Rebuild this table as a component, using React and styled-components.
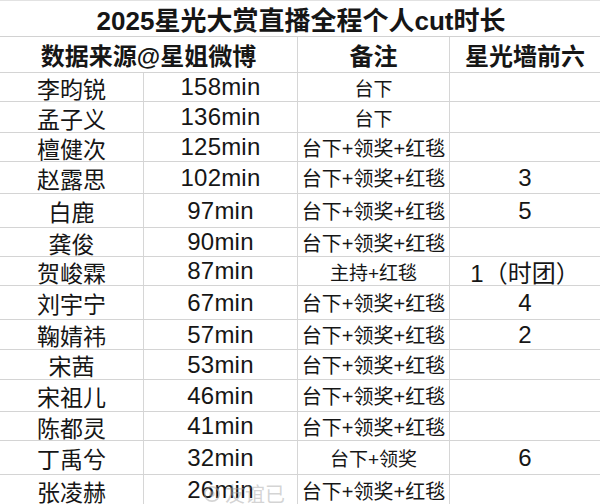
import React from 'react'
import styled, { createGlobalStyle } from 'styled-components'

const Global = createGlobalStyle`
  html, body {
    margin: 0;
    padding: 0;
    background: #fff;
    overflow: hidden;
  }
  body {
    font-family: "Liberation Sans", "Noto Sans CJK SC", sans-serif;
    color: #161616;
  }
`;

const Sheet = styled.div`
  width: 600px;
  height: 504px;
  overflow: hidden;
  position: relative;
  border-top: 1px solid #e2e2e2;
  box-sizing: border-box;
`;

const Title = styled.div`
  height: 36px;
  border-bottom: 1px solid #d2d2d2;
  box-sizing: border-box;
  display: flex;
  align-items: center;
  justify-content: center;
  font-size: 26px;
  font-weight: 700;
  padding-left: 2px;
`;

const Row = styled.div`
  display: grid;
  grid-template-columns: 144px 154px 152px 150px;
  height: ${p => p.$h}px;
  border-bottom: 1px solid #d4d4d4;
  box-sizing: border-box;
`;

const HeadRow = styled(Row)`
  grid-template-columns: 298px 152px 150px;
  font-weight: 700;
  font-size: 24px;
`;

const Cell = styled.div`
  display: flex;
  align-items: center;
  justify-content: center;
  border-right: ${p => (p.$last ? 'none' : '1px solid #d6d6d6')};
  white-space: nowrap;
  overflow: hidden;
`;

const Name = styled(Cell)`
  font-size: 23px;
  padding-top: 1px;
`;

const Mins = styled(Cell)`
  font-size: 24px;
  letter-spacing: 0.2px;
`;

const Note = styled(Cell)`
  font-size: ${p => (p.$long ? 20 : 19)}px;
`;

const Rank = styled(Cell)`
  font-size: 24px;
`;

const Watermark = styled.div`
  position: absolute;
  left: 203px;
  top: 478px;
  display: flex;
  align-items: center;
  gap: 4px;
  color: rgba(170, 170, 170, 0.5);
  font-size: 20px;
  pointer-events: none;
`;

const rows = [
  ['李昀锐', '158min', '台下', '', 29],
  ['孟子义', '136min', '台下', '', 31],
  ['檀健次', '125min', '台下+领奖+红毯', '', 29],
  ['赵露思', '102min', '台下+领奖+红毯', '3', 32],
  ['白鹿', '97min', '台下+领奖+红毯', '5', 34],
  ['龚俊', '90min', '台下+领奖+红毯', '', 29],
  ['贺峻霖', '87min', '主持+红毯', '1（时团）', 29],
  ['刘宇宁', '67min', '台下+领奖+红毯', '4', 34],
  ['鞠婧祎', '57min', '台下+领奖+红毯', '2', 30],
  ['宋茜', '53min', '台下+领奖+红毯', '', 30],
  ['宋祖儿', '46min', '台下+领奖+红毯', '', 32],
  ['陈都灵', '41min', '台下+领奖+红毯', '', 29],
  ['丁禹兮', '32min', '台下+领奖', '6', 34],
  ['张凌赫', '26min', '台下+领奖+红毯', '', 31],
]

const App = () => {
  return (
    <Sheet>
      <Global />
      <Title>2025星光大赏直播全程个人cut时长</Title>
      <HeadRow $h={36}>
        <Cell>数据来源@星姐微博</Cell>
        <Cell>备注</Cell>
        <Cell $last>星光墙前六</Cell>
      </HeadRow>
      {rows.map(([name, min, note, rank, h]) => (
        <Row key={name} $h={h}>
          <Name>{name}</Name>
          <Mins>{min}</Mins>
          <Note $long={note.length > 5}>{note}</Note>
          <Rank $last>{rank}</Rank>
        </Row>
      ))}
      <Watermark>
        <svg width="18" height="18" viewBox="0 0 20 20">
          <circle cx="10" cy="10" r="8" fill="none" stroke="currentColor" strokeWidth="2" />
          <circle cx="10" cy="10" r="3" fill="currentColor" />
        </svg>
        友谊已
      </Watermark>
    </Sheet>
  )
}

export default App
